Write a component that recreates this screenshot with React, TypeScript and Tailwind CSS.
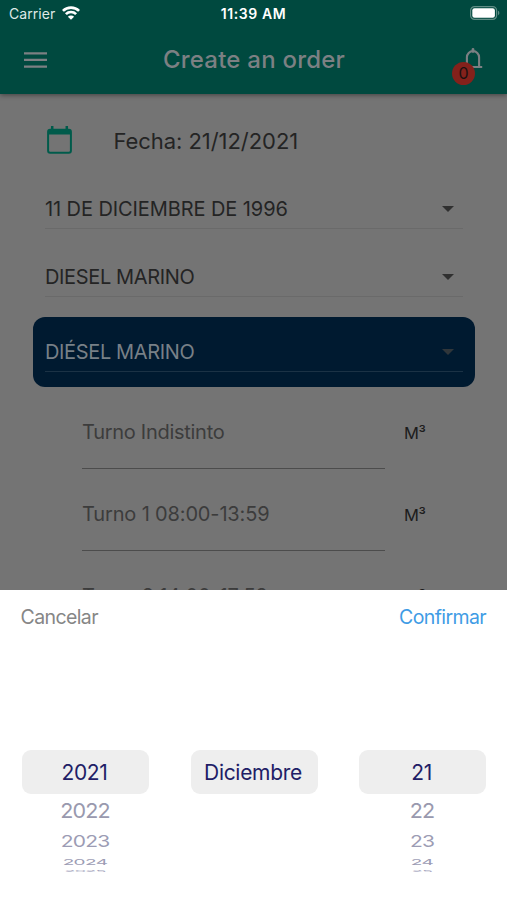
import { clsx } from 'clsx';

const selects = [
    { label: '11 DE DICIEMBRE DE 1996', className: 'tracking-[-0.09px]' },
    { label: 'DIESEL MARINO', className: 'tracking-[-0.36px]' },
];

const shifts = [
    { label: 'Turno Indistinto', className: 'tracking-[-0.28px]' },
    { label: 'Turno 1 08:00-13:59', className: 'tracking-[-0.15px]' },
    { label: 'Turno 2 14:00-17:59', className: 'tracking-[-0.15px]' },
];

const columns = [
    { id: 'year', values: ['2021', '2022', '2023', '2024', '2025'] },
    { id: 'month', values: ['Diciembre'] },
    { id: 'day', values: ['21', '22', '23', '24', '25'] },
];

// Rows shrink as they roll over the bottom edge of the wheel
const wheelRows = [
    { row: 'h-[33px]', text: 'text-[#9999ae] text-[21.5px] tracking-[-0.8px] scale-y-[0.95]' },
    { row: 'h-[28px]', text: 'text-[#9c9cb4] text-[21px] tracking-[-0.8px] scale-y-[0.76]' },
    { row: 'h-[14px]', text: 'text-[#9c9cb4] text-[19px] tracking-[-0.6px] scale-y-[0.42]' },
    { row: 'h-[4px]', text: 'text-[#a5a5bd] text-[18px] tracking-[-0.8px] scale-y-[0.14]' },
];

function Caret({ className }: { className: string }) {
    return (
        <svg viewBox="0 0 12 6" className={clsx('w-3 h-1.5', className)} fill="currentColor">
            <path d="M0 0h12L6 6z" />
        </svg>
    );
}

function StatusBar() {
    return (
        <div className="h-[27px] grid grid-cols-3 items-center pl-[9px] pr-[7px] text-white">
            <div className="flex items-center gap-[7px]">
                <span className="text-[14px] tracking-[0.05px] text-[#dfe9e7]">Carrier</span>
                <svg viewBox="0 0 18 14" className="w-[18px] h-[14px] -mt-0.5" fill="none" stroke="currentColor" strokeWidth="2.7">
                    <path d="M.9 4.9a11.5 11.5 0 0 1 16.2 0" />
                    <path d="M3.9 8.1a7.3 7.3 0 0 1 10.2 0" />
                    <path d="M9 13.8 5.9 10.7a4.4 4.4 0 0 1 6.2 0z" fill="currentColor" stroke="none" />
                </svg>
            </div>
            <span className="-ml-[2px] text-center text-[14px] font-semibold tracking-[0.6px] whitespace-nowrap">11:39 AM</span>
            <svg viewBox="0 0 30 14" className="w-[30px] h-[14px] justify-self-end -mt-px">
                <rect x=".6" y=".6" width="26" height="12.8" rx="4" fill="none" stroke="#5f8d85" strokeWidth="1.2" />
                <rect x="2.3" y="2.3" width="22.6" height="9.4" rx="2.2" fill="#fff" />
                <path d="M28 4.8c1.8.6 1.8 3.8 0 4.4z" fill="#5f8d85" />
            </svg>
        </div>
    );
}

function Header() {
    return (
        <header className="h-[94px] shrink-0 bg-[#00493f] shadow-[0_1px_5px_rgba(0,0,0,0.45)] z-10">
            <StatusBar />
            <div className="h-[66px] flex items-center justify-between pl-[24px] pr-[24px] text-[#7c8083]">
                <svg viewBox="0 0 23 16" className="w-[23px] h-[16px]" fill="currentColor">
                    <path d="M0 .2h23v2.3H0zM0 6.8h23v2.3H0zM0 13.4h23v2.3H0z" />
                </svg>
                <h1 className="text-[24px] font-medium tracking-[0.22px] -ml-[2px]">Create an order</h1>
                <div className="relative">
                    <svg viewBox="0 0 20 22" className="w-[20px] h-[22px] -mt-[3px]" fill="none" stroke="currentColor" strokeWidth="2.1">
                        <path d="M3.9 18.9V9.2a6.1 6.1 0 0 1 12.2 0v9.7M0.8 19h18.4" />
                        <path d="M10 1.4v2" strokeWidth="2.8" strokeLinecap="round" />
                    </svg>
                    <span className="absolute -left-[11px] top-[11px] size-[23px] rounded-full bg-[#84211b] flex items-center justify-center text-[16px] text-[#1b1010]">
                        0
                    </span>
                </div>
            </div>
        </header>
    );
}

function DatePicker() {
    return (
        <section className="h-[310px] shrink-0 bg-white z-10">
            <div className="h-[56px] flex items-center justify-between pl-[20.5px] pr-[21px] text-[19.5px]">
                <button className="text-[#868686] tracking-[-0.6px]">Cancelar</button>
                <button className="text-[#3f9ce5] tracking-[-0.6px]">Confirmar</button>
            </div>
            <div className="flex justify-between pl-[22px] pr-[21px] pt-[104px]">
                {columns.map((column) => (
                    <div key={column.id} className="w-[127px] flex flex-col items-center">
                        <div className="w-full h-[44px] rounded-[9px] bg-[#eeeeee] text-[#211d66] text-[21px] tracking-[-0.3px] flex items-center justify-center pt-px pr-[2px]">
                            {column.values[0]}
                        </div>
                        {column.values.slice(1).map((value, i) => (
                            <div key={value} className={clsx('flex items-center justify-center pr-px', wheelRows[i].row)}>
                                <span className={clsx('leading-none', wheelRows[i].text)}>{value}</span>
                            </div>
                        ))}
                    </div>
                ))}
            </div>
        </section>
    );
}

export default function App() {
    return (
        <div className="w-full h-[900px] flex flex-col overflow-hidden bg-[#747474] font-['Inter',sans-serif]">
            <Header />

            <main className="flex-1 min-h-0 overflow-hidden pl-[33px] pr-[32px]">
                <div className="h-[81px] pt-[13px] flex items-center pl-[14px] gap-[41.5px]">
                    <svg viewBox="0 0 25 28" className="w-[25px] h-[28px] -mt-[2px]" fill="none" stroke="#005b4b" strokeWidth="2">
                        <rect x="1.1" y="3.7" width="22.8" height="23" rx="2" />
                        <path d="M1 4h23v4.5H1z" fill="#005b4b" stroke="none" />
                        <path d="M5.2 0v5M19.8 0v5" strokeWidth="2.5" />
                    </svg>
                    <span className="text-[22px] tracking-[-0.06px] text-[#242424]">Fecha: 21/12/2021</span>
                </div>

                {selects.map((select) => (
                    <div key={select.label} className="h-[68px] px-[12px]">
                        <div className="h-[54px] pt-[14px] flex items-center justify-between pr-[9px] border-b border-[#6a6a6a]">
                            <span className={clsx('text-[20px] text-[#242424]', select.className)}>{select.label}</span>
                            <Caret className="text-[#303030]" />
                        </div>
                    </div>
                ))}

                <div className="mt-[6px] h-[70px] rounded-[12px] bg-[#001a30] px-[12px]">
                    <div className="h-[55px] pt-[15px] flex items-center justify-between pr-[9px] border-b border-[#1b3245]">
                        <span className="text-[20px] tracking-[-0.36px] text-[#788087]">DIÉSEL MARINO</span>
                        <Caret className="text-[#30363a]" />
                    </div>
                </div>

                {shifts.map((shift) => (
                    <div key={shift.label} className="h-[82px] pl-[49px] flex">
                        <div className="w-[303px] h-[82px] pt-[9px] flex items-center border-b border-[#4c4c4c]">
                            <span className={clsx('text-[20px] text-[#3c3c3c]', shift.className)}>{shift.label}</span>
                        </div>
                        <span className="ml-[19px] pt-[33px] text-[16.5px] leading-[26px] tracking-[-0.3px] text-[#1c1c1c]">M³</span>
                    </div>
                ))}
            </main>

            <DatePicker />
        </div>
    );
}
